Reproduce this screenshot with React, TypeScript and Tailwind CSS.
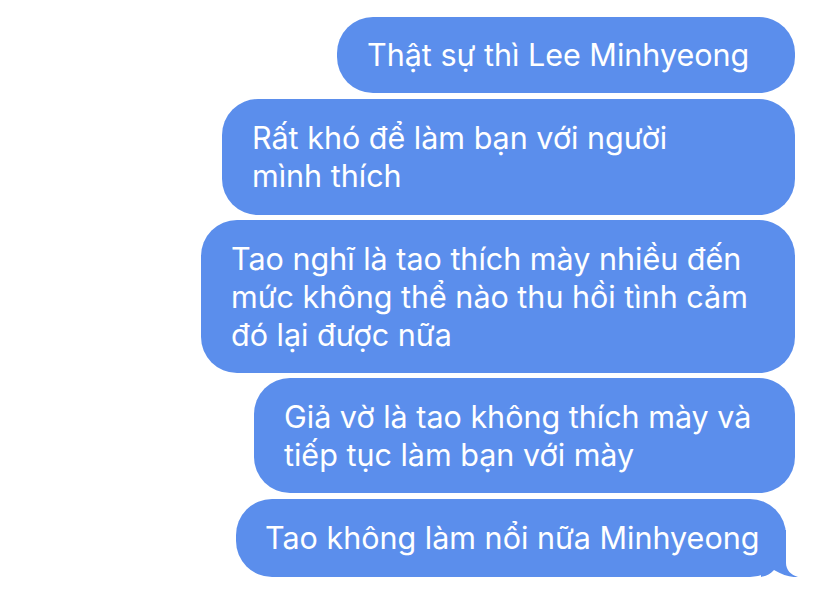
const bubbles = [
  { lines: ["Thật sự thì Lee Minhyeong"], w: "w-[458px] h-[76px]" },
  {
    lines: ["Rất khó để làm bạn với người", "mình thích"],
    w: "w-[573px] h-[116px] mt-[6px]",
  },
  {
    lines: [
      "Tao nghĩ là tao thích mày nhiều đến",
      "mức không thể nào thu hồi tình cảm",
      "đó lại được nữa",
    ],
    w: "w-[594px] h-[153px] mt-[5px]",
  },
  {
    lines: ["Giả vờ là tao không thích mày và", "tiếp tục làm bạn với mày"],
    w: "w-[541px] h-[115px] mt-[5px]",
  },
];

const Tail = () => (
  <svg
    className="absolute bottom-0 right-[-15px]"
    width="40"
    height="47"
    viewBox="0 0 40 47"
  >
    <path
      d="M25 0 V33 C25 40 30 45 37 47 C31 47.6 22 45.5 13 40 C10 43.5 6 46 0 47 V0 Z"
      fill="#5b8eec"
    />
  </svg>
);

export default function App() {
  return (
    <div
      className="w-[828px] h-[597px] bg-white flex flex-col items-end pt-[17px] pr-[33px] text-white text-[30.5px] leading-[38px]"
      style={{ fontFamily: "Inter, 'Noto Sans', sans-serif" }}
    >
      {bubbles.map((b, i) => (
        <div
          key={i}
          className={`${b.w} bg-[#5b8eec] rounded-[36px] pl-[30px] flex flex-col justify-center whitespace-nowrap`}
        >
          {b.lines.map((l) => (
            <div key={l}>{l}</div>
          ))}
        </div>
      ))}
      <div className="relative w-[550px] h-[78px] mt-[6px] mr-[9px] bg-[#5b8eec] rounded-[36px] pl-[29px] flex flex-col justify-center whitespace-nowrap">
        <div>Tao không làm nổi nữa Minhyeong</div>
        <Tail />
      </div>
    </div>
  );
}
